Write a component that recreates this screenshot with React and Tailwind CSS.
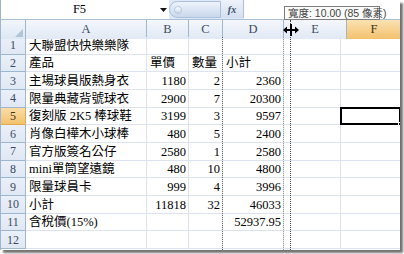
const FONT = { fontFamily: '"Liberation Serif", "Noto Sans CJK TC", serif' };

const colsBody = 'grid-cols-[25px_121px_42px_34px_61px_57px_60px]';

const rows = [
  ['大聯盟快快樂樂隊', '', '', ''],
  ['產品', '單價', '數量', '小計'],
  ['主場球員版熱身衣', '1180', '2', '2360'],
  ['限量典藏背號球衣', '2900', '7', '20300'],
  ['復刻版 2K5 棒球鞋', '3199', '3', '9597'],
  ['肖像白樺木小球棒', '480', '5', '2400'],
  ['官方版簽名公仔', '2580', '1', '2580'],
  ['mini單筒望遠鏡', '480', '10', '4800'],
  ['限量球員卡', '999', '4', '3996'],
  ['小計', '11818', '32', '46033'],
  ['含稅價(15%)', '', '', '52937.95'],
  ['', '', '', ''],
];

function Cell({ children, right, className = '' }) {
  return (
    <div
      className={`flex items-center pt-[1px] overflow-visible whitespace-nowrap border-r border-b border-[#dde3ee] text-[12.5px] leading-none text-black ${
        right ? 'justify-end pr-[2px]' : 'pl-[3px]'
      } ${className}`}
    >
      {children}
    </div>
  );
}

function ResizeCursor() {
  return (
    <svg width="18" height="12" viewBox="0 0 18 12" className="absolute left-[281px] top-[24px]">
      <rect x="8" y="0" width="2" height="12" fill="#000" />
      <path d="M1 6 L5 2.5 L5 5 L8 5 L8 7 L5 7 L5 9.5 Z" fill="#000" />
      <path d="M17 6 L13 2.5 L13 5 L10 5 L10 7 L13 7 L13 9.5 Z" fill="#000" />
    </svg>
  );
}

export default function App() {
  const isRow5 = (i) => i === 4;
  return (
    <div className="w-[404px] h-[254px] bg-white" style={FONT}>
      <div className="relative w-[400px] h-[250px] bg-white shadow-[3px_3px_2px_rgba(0,0,0,0.55)] border-l border-[#9fb5d2] overflow-hidden">
        {/* formula bar */}
        <div className="flex h-[20px] border-b border-[#a9bfd6] bg-[#dfe8f5]">
          <div className="w-[157px] bg-white flex items-center justify-center text-[12.5px] text-black">F5</div>
          <div className="w-[11px] bg-white flex items-center justify-center">
            <svg width="7" height="4" viewBox="0 0 7 4"><path d="M0 0 L7 0 L3.5 4 Z" fill="#111" /></svg>
          </div>
          <div className="w-[52px] h-[17px] mt-[1px] rounded-l-full bg-gradient-to-b from-[#eef3fa] to-[#c9d8ec] border border-[#aac0db] flex items-center pl-[4px]">
            <div className="w-[8px] h-[8px] rounded-full bg-gradient-to-b from-white to-[#c8d6e8] border border-[#b7c8dd]" />
          </div>
          <div className="w-[23px] h-[18px] bg-gradient-to-b from-[#eef3fa] to-[#d3def0] border-r border-[#aac0db] flex items-center justify-center">
            <span className="text-[10px] italic font-bold text-[#3d4f66]">fx</span>
          </div>
          <div className="flex-1 bg-white" />
        </div>

        {/* column headers */}
        <div className="grid grid-cols-[25px_121px_42px_34px_61px_63px_54px] h-[17px] border-b border-[#9eb6ce] text-[12.5px] text-[#3c4b5f]">
          <div className="relative bg-gradient-to-b from-[#f3f6fb] to-[#dde7f4] border-r border-[#9eb6ce]">
            <svg width="8" height="8" viewBox="0 0 8 8" className="absolute right-[2px] bottom-[2px]">
              <path d="M8 0 L8 8 L0 8 Z" fill="#b4c3d6" />
            </svg>
          </div>
          {['A', 'B', 'C', 'D', 'E'].map((c) => (
            <div key={c} className="flex items-center justify-center bg-gradient-to-b from-[#f4f7fc] to-[#e1e9f5] border-r border-[#9eb6ce]">
              {c}
            </div>
          ))}
          <div className="flex items-center justify-center bg-gradient-to-b from-[#fbe2b2] to-[#f2c16b] text-[#3c3320]">F</div>
        </div>

        {/* body */}
        <div className={`grid ${colsBody} grid-rows-12 h-[212px]`}>
          {rows.map((r, i) => [
            <div
              key={`h${i}`}
              className={`flex items-center justify-center border-r border-b text-[12px] ${
                isRow5(i)
                  ? 'bg-gradient-to-b from-[#fbdca6] to-[#f3c36e] border-[#e3a94f] text-[#3c3320]'
                  : 'bg-gradient-to-b from-[#eaf0f9] to-[#e0e8f4] border-[#9eb6ce] text-[#3c4b5f]'
              }`}
            >
              {i + 1}
            </div>,
            <Cell key={`a${i}`}>{r[0]}</Cell>,
            <Cell key={`b${i}`} right={i !== 1}>{r[1]}</Cell>,
            <Cell key={`c${i}`} right={i !== 1}>{r[2]}</Cell>,
            <Cell key={`d${i}`} right={i !== 1}>{r[3]}</Cell>,
            <Cell key={`e${i}`} />,
            <Cell key={`f${i}`} className={isRow5(i) ? 'relative' : ''}>
              {isRow5(i) && (
                <div className="absolute -left-[1px] -top-[1px] -right-[1px] -bottom-[1px] border-2 border-black">
                  <div className="absolute -right-[3px] -bottom-[3px] w-[4px] h-[4px] bg-black border border-white" />
                </div>
              )}
            </Cell>,
          ])}
        </div>

        {/* page break & drag lines */}
        <div className="absolute left-[221px] top-[37px] h-[213px] border-l border-dotted border-[#6b6b6b]" />
        <div className="absolute left-[282px] top-[37px] h-[213px] border-l border-dotted border-[#9a9a9a]" />
        <div className="absolute left-[289px] top-[20px] h-[230px] border-l border-dotted border-[#444]" />

        <ResizeCursor />

        {/* tooltip */}
        <div
          className="absolute left-[283px] top-[6px] w-[96px] h-[14px] bg-[#fbfbfb] border border-[#7d7d7d] flex items-center pl-[3px] text-[10.5px] leading-none text-[#444] whitespace-nowrap"
          style={{ fontFamily: '"Liberation Sans", "Noto Sans CJK TC", sans-serif' }}
        >
          寬度: 10.00 (85 像素)
        </div>
      </div>
    </div>
  );
}
